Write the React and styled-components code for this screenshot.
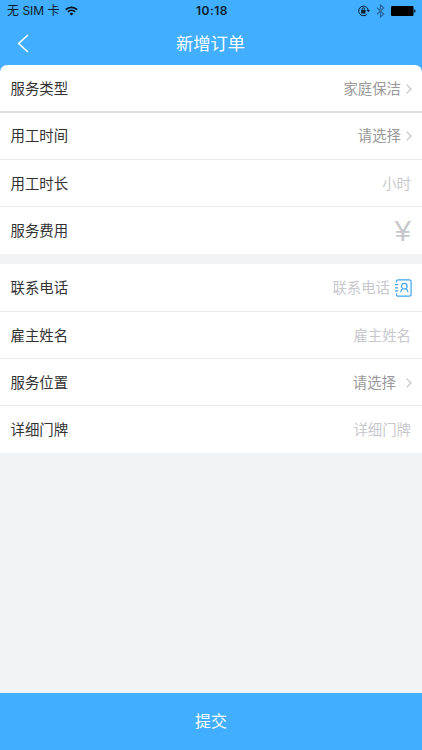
import React from 'react';
import styled, { createGlobalStyle } from 'styled-components';

const GlobalStyle = createGlobalStyle`
  * { box-sizing: border-box; }
  body { margin: 0; font-family: Inter, "Noto Sans CJK SC", sans-serif; }
`;

const Screen = styled.div`
  display: flex;
  flex-direction: column;
  width: 422px;
  height: 750px;
  overflow: hidden;
  background: #f2f3f5;
`;

const Top = styled.header`
  height: 72px;
  margin-bottom: -7px;
  flex: none;
  background: #42aeff;
`;

const StatusBar = styled.div`
  display: grid;
  grid-template-columns: 1fr auto 1fr;
  align-items: center;
  height: 22px;
  padding: 0 6px 0 7px;
  font-size: 12px;
  line-height: 22px;
  color: #0b1b29;
`;

const Carrier = styled.div`
  display: flex;
  align-items: center;
  gap: 5px;
  white-space: pre;
`;

const Clock = styled.div`
  font-size: 12px;
  font-weight: 600;
  letter-spacing: 0.5px;
  padding-left: 1px;
`;

const StatusIcons = styled.div`
  display: flex;
  justify-content: flex-end;
  align-items: center;
  gap: 6px;
`;

const NavBar = styled.div`
  display: grid;
  grid-template-columns: 46px 1fr 47px;
  align-items: center;
  height: 43px;
  color: #fff;
`;

const BackButton = styled.button`
  display: flex;
  padding: 0 0 1px 17px;
  border: 0;
  background: none;
  color: inherit;
`;

const Title = styled.h1`
  margin: 0;
  text-align: center;
  font-size: 17.3px;
  font-weight: 400;
  line-height: 42px;
`;

const Group = styled.section`
  flex: none;
  height: 189px;
  display: grid;
  grid-template-rows: 48px 47px 47px 47px;
  margin-bottom: 10px;
  background: #fff;
  border-radius: ${(p) => (p.$rounded ? '7px 7px 0 0' : '0')};
`;

const Row = styled.div`
  display: flex;
  align-items: center;
  justify-content: space-between;
  padding: ${(p) => (p.$raised ? '0' : '1px')} 10px 0 10.5px;
  font-size: 14.4px;
  line-height: 20px;
  border-bottom: ${(p) => (p.$strong ? '2px solid #dedede' : '1px solid #ececec')};
  &:last-child { border-bottom: 0; }
`;

const Label = styled.span`
  color: #333;
`;

const Value = styled.span`
  display: flex;
  align-items: center;
  gap: ${(p) => p.$gap || 5}px;
  color: ${(p) => (p.$placeholder ? '#c8c8cd' : '#999')};
  margin-right: ${(p) => (p.$inset ? '1px' : '0')};
`;

const Currency = styled.span`
  font-family: "Liberation Sans", sans-serif;
  font-size: 29px;
  font-weight: 400;
  line-height: 28px;
  margin-right: 1px;
  color: #c6c6cb;
`;

const Submit = styled.button`
  margin-top: auto;
  height: 57px;
  flex: none;
  border: 0;
  padding: 0 0 3px;
  background: #42aeff;
  color: #fff;
  font: 400 16px/54px "Noto Sans CJK SC", sans-serif;
`;

const WifiIcon = () => (
  <svg width="13" height="10" viewBox="0 0 13 10" fill="none" stroke="#061019" strokeWidth="1.8">
    <path d="M0.8 3.6a8.2 8.2 0 0 1 11.4 0M2.9 5.9a5.2 5.2 0 0 1 7.2 0" />
    <path d="M6.5 9.5 4.6 7.7a2.7 2.7 0 0 1 3.8 0z" fill="#061019" stroke="none" />
  </svg>
);

const LockIcon = () => (
  <svg width="12" height="12" viewBox="0 0 12 12" fill="none" stroke="#0a1c2b">
    <path d="M8.8 9.4A4.8 4.8 0 1 1 10.2 5" />
    <path d="M8.5 5h3.5l-1.7 2.3z" fill="#0a1c2b" stroke="none" />
    <rect x="3.2" y="5" width="4.3" height="3.5" fill="#0a1c2b" stroke="none" />
    <path d="M4.1 5.4V4a1.25 1.25 0 0 1 2.5 0v1.4" strokeWidth="0.9" />
  </svg>
);

const BluetoothIcon = () => (
  <svg width="9" height="14" viewBox="0 0 9 14" fill="none" stroke="#28689a" strokeWidth="1.2">
    <path d="M1 3.8 7.7 10 4.5 13V1l3.2 3L1 10.2" />
  </svg>
);

const BatteryIcon = () => (
  <svg width="25" height="10" viewBox="0 0 25 10" fill="#000">
    <rect width="22.5" height="10" rx="1.2" />
    <path d="M23.2 3.2c1.8.4 1.8 3.2 0 3.6z" />
  </svg>
);

const BackIcon = () => (
  <svg width="12" height="19" viewBox="0 0 12 19" fill="none" stroke="#fff" strokeWidth="1.6">
    <path d="M11 1 1.6 9.5 11 18" />
  </svg>
);

const Chevron = () => (
  <svg width="6" height="10" viewBox="0 0 6 10" fill="none" stroke="#c2c2c6" strokeWidth="1.1">
    <path d="M0.7 0.7 5.1 5 0.7 9.3" />
  </svg>
);

const ContactIcon = () => (
  <svg width="17" height="18" viewBox="0 0 17 18" fill="none" stroke="#42a5ed" strokeWidth="1.2">
    <path d="M1.5 3.4V2.4C1.5 1.4 2.2.9 3.1.9h11c1.2 0 2 .7 2 1.9v12.4c0 1.2-.8 1.9-2 1.9h-11c-.9 0-1.6-.5-1.6-1.5v-1.4M0 5.7h3.2M0 8.8h3.2M0 11.9h3.2" />
    <circle cx="9.3" cy="7.2" r="2.8" />
    <path d="M5.6 13.2c.2-1.8 1-2.9 2.3-3.5M10.7 9.7c1.3.6 2.1 1.7 2.3 3.5" />
  </svg>
);

export default function App() {
  return (
    <>
      <GlobalStyle />
      <Screen>
        <Top>
          <StatusBar>
            <Carrier>无 SIM 卡<WifiIcon /></Carrier>
            <Clock>10:18</Clock>
            <StatusIcons><LockIcon /><BluetoothIcon /><BatteryIcon /></StatusIcons>
          </StatusBar>
          <NavBar>
            <BackButton aria-label="返回"><BackIcon /></BackButton>
            <Title>新增订单</Title>
          </NavBar>
        </Top>
        <Group $rounded>
          <Row $strong><Label>服务类型</Label><Value>家庭保洁<Chevron /></Value></Row>
          <Row $raised><Label>用工时间</Label><Value>请选择<Chevron /></Value></Row>
          <Row><Label>用工时长</Label><Value $placeholder $inset>小时</Value></Row>
          <Row><Label>服务费用</Label><Currency>¥</Currency></Row>
        </Group>
        <Group>
          <Row><Label>联系电话</Label><Value $placeholder>联系电话<ContactIcon /></Value></Row>
          <Row><Label>雇主姓名</Label><Value $placeholder $inset>雇主姓名</Value></Row>
          <Row><Label>服务位置</Label><Value $gap={10}>请选择<Chevron /></Value></Row>
          <Row><Label>详细门牌</Label><Value $placeholder $inset>详细门牌</Value></Row>
        </Group>
        <Submit>提交</Submit>
      </Screen>
    </>
  );
}
